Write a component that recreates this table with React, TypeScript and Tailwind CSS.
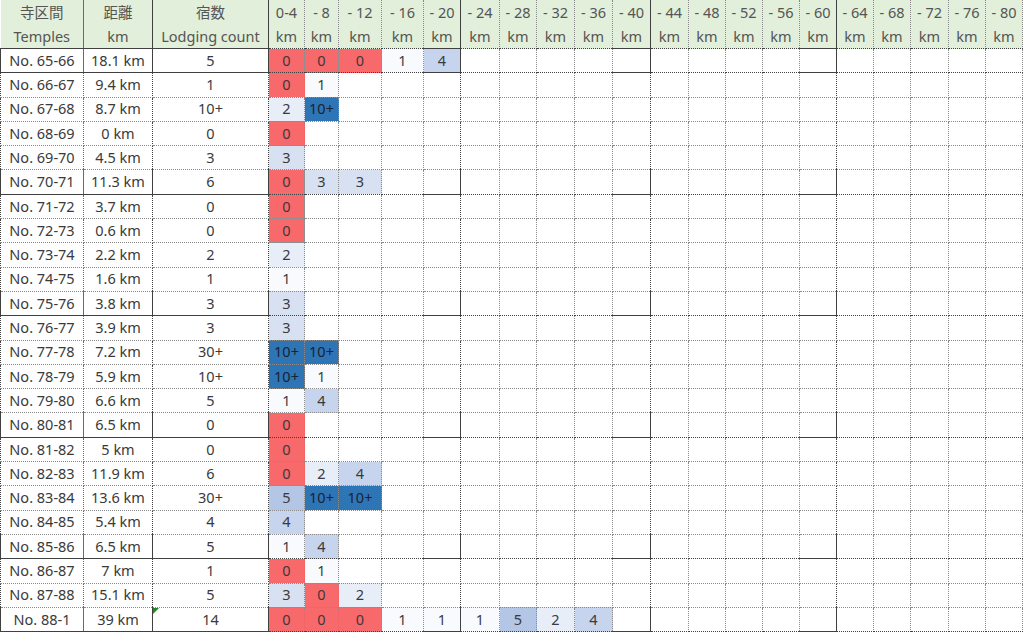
import React from "react"

type Row = { name: string; dist: string; count: string; cells: string[] }

const rows: Row[] = [
  { name: "No. 65-66", dist: "18.1 km", count: "5", cells: ["0", "0", "0", "1", "4"] },
  { name: "No. 66-67", dist: "9.4 km", count: "1", cells: ["0", "1"] },
  { name: "No. 67-68", dist: "8.7 km", count: "10+", cells: ["2", "10+"] },
  { name: "No. 68-69", dist: "0 km", count: "0", cells: ["0"] },
  { name: "No. 69-70", dist: "4.5 km", count: "3", cells: ["3"] },
  { name: "No. 70-71", dist: "11.3 km", count: "6", cells: ["0", "3", "3"] },
  { name: "No. 71-72", dist: "3.7 km", count: "0", cells: ["0"] },
  { name: "No. 72-73", dist: "0.6 km", count: "0", cells: ["0"] },
  { name: "No. 73-74", dist: "2.2 km", count: "2", cells: ["2"] },
  { name: "No. 74-75", dist: "1.6 km", count: "1", cells: ["1"] },
  { name: "No. 75-76", dist: "3.8 km", count: "3", cells: ["3"] },
  { name: "No. 76-77", dist: "3.9 km", count: "3", cells: ["3"] },
  { name: "No. 77-78", dist: "7.2 km", count: "30+", cells: ["10+", "10+"] },
  { name: "No. 78-79", dist: "5.9 km", count: "10+", cells: ["10+", "1"] },
  { name: "No. 79-80", dist: "6.6 km", count: "5", cells: ["1", "4"] },
  { name: "No. 80-81", dist: "6.5 km", count: "0", cells: ["0"] },
  { name: "No. 81-82", dist: "5 km", count: "0", cells: ["0"] },
  { name: "No. 82-83", dist: "11.9 km", count: "6", cells: ["0", "2", "4"] },
  { name: "No. 83-84", dist: "13.6 km", count: "30+", cells: ["5", "10+", "10+"] },
  { name: "No. 84-85", dist: "5.4 km", count: "4", cells: ["4"] },
  { name: "No. 85-86", dist: "6.5 km", count: "5", cells: ["1", "4"] },
  { name: "No. 86-87", dist: "7 km", count: "1", cells: ["0", "1"] },
  { name: "No. 87-88", dist: "15.1 km", count: "5", cells: ["3", "0", "2"] },
  { name: "No. 88-1", dist: "39 km", count: "14", cells: ["0", "0", "0", "1", "1", "1", "5", "2", "4"] },
]

const ranges = ["0-4", "- 8", "- 12", "- 16", "- 20", "- 24", "- 28", "- 32", "- 36", "- 40", "- 44", "- 48", "- 52", "- 56", "- 60", "- 64", "- 68", "- 72", "- 76", "- 80"]

// column widths, measured off the sheet
const widths = [
  "w-[83px]", "w-[69px]", "w-[116px]",
  "w-[36px]", "w-[34px]", "w-[43px]", "w-[42px]", "w-[37px]",
  "w-[39px]", "w-[37px]", "w-[38px]", "w-[38px]", "w-[38px]",
  "w-[38px]", "w-[37px]", "w-[37px]", "w-[37px]", "w-[37px]",
  "w-[37px]", "w-[37px]", "w-[38px]", "w-[37px]", "w-[37px]",
]

const solidCols = [0, 1, 2, 7, 12, 17]
const solidRows = [0, 5, 10, 15, 20, 23]

const fills: Record<string, string> = {
  "0": "bg-[#f8696b]",
  "1": "bg-[#f9fafd]",
  "2": "bg-[#e8eef8]",
  "3": "bg-[#d7e1f2]",
  "4": "bg-[#c6d5ed]",
  "5": "bg-[#b3c6e5]",
  "10+": "bg-[#2e75b6] text-[#1b2230]",
}

function rightBorder(i: number) {
  if (i === 0) return "border-r border-r-[#6b6b6b]"
  if (solidCols.includes(i)) return "border-r border-r-[#404040]"
  return "border-r border-dotted border-r-[#8a8a8a]"
}

export default function App() {
  return (
    <div className="w-[1024px] h-[632px] overflow-hidden bg-white text-[#3a3a3a] text-[14.5px]" style={{ fontFamily: '"Noto Sans", "Noto Sans CJK JP", sans-serif' }}>
      <table className="table-fixed border-collapse w-[1022px]">
        <colgroup>
          {widths.map((w, i) => (
            <col key={i} className={w} />
          ))}
        </colgroup>
        <thead>
          <tr className="bg-[#e2efda] text-[#555]">
            {[["寺区間", "Temples"], ["距離", "km"], ["宿数", "Lodging count"], ...ranges.map((r) => [r, "km"])].map(([a, b], i) => (
              <th key={i} className={`p-0 font-normal text-center border-b border-b-[#404040] ${rightBorder(i)}`}>
                <div className="h-[24px] leading-[24px] whitespace-nowrap">{a}</div>
                <div className="h-[24px] leading-[24px] whitespace-nowrap">{b}</div>
              </th>
            ))}
          </tr>
        </thead>
        <tbody>
          {rows.map((row, r) => {
            const bottom = solidRows.includes(r) ? "border-b border-b-[#404040]" : "border-b border-dotted border-b-[#8a8a8a]"
            return (
              <tr key={r} className="h-[24.3px]">
                <td className={`p-0 text-center whitespace-nowrap border-l border-l-[#404040] ${bottom} ${rightBorder(0)}`}>{row.name}</td>
                <td className={`p-0 text-center whitespace-nowrap ${bottom} ${rightBorder(1)}`}>{row.dist}</td>
                <td className={`p-0 text-center whitespace-nowrap relative ${bottom} ${rightBorder(2)}`}>
                  {r === rows.length - 1 && (
                    <span className="absolute left-0 top-0 w-0 h-0 border-t-[6px] border-t-[#1d8a24] border-r-[6px] border-r-transparent" />
                  )}
                  {row.count}
                </td>
                {ranges.map((_, c) => {
                  const v = row.cells[c]
                  return (
                    <td key={c} className={`p-0 text-center whitespace-nowrap ${v ? fills[v] : ""} ${bottom} ${rightBorder(c + 3)}`}>
                      {v ?? ""}
                    </td>
                  )
                })}
              </tr>
            )
          })}
        </tbody>
      </table>
    </div>
  )
}
